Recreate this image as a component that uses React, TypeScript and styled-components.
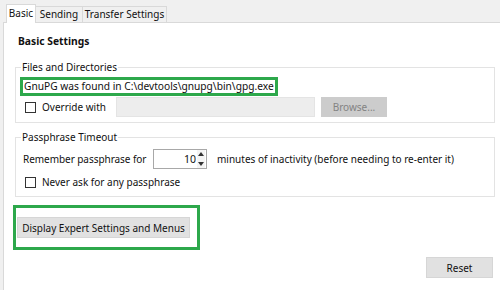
import React from "react";
import styled, { createGlobalStyle } from "styled-components";

const GlobalStyle = createGlobalStyle`
  html, body { margin: 0; padding: 0; }
  body { font-family: "Noto Sans", "Open Sans", sans-serif; color: #111; }
  * { box-sizing: border-box; }
`;

const Root = styled.div`
  width: 500px;
  height: 290px;
  background: #f0f0f0;
  overflow: hidden;
  display: flex;
  flex-direction: column;
  font-size: 10px;
`;

const TabStrip = styled.div`
  height: 22px;
  display: flex;
  align-items: flex-end;
  padding-left: 6px;
  position: relative;
  z-index: 1;
`;

const Tab = styled.div<{ $active?: boolean; $w: number }>`
  width: ${(p) => p.$w}px;
  height: ${(p) => (p.$active ? "19px" : "16px")};
  margin-bottom: ${(p) => (p.$active ? "-1px" : "0")};
  border: 1px solid #d9d9d9;
  border-bottom: none;
  margin-left: ${(p) => (p.$active ? "0" : "-1px")};
  background: ${(p) => (p.$active ? "#ffffff" : "#f0f0f0")};
  line-height: ${(p) => (p.$active ? "16px" : "15px")};
  text-align: center;
  white-space: nowrap;
`;

const Panel = styled.div`
  flex: 1;
  margin-left: 3px;
  background: #ffffff;
  border-left: 1px solid #d9d9d9;
  border-top: 1px solid #d9d9d9;
  padding: 10px 7px 0 14px;
  display: flex;
  flex-direction: column;
`;

const Title = styled.div`
  font-weight: 700;
  font-size: 10.3px;
  line-height: 16px;
  height: 16px;
`;

const Group = styled.fieldset<{ $mt: number }>`
  margin: ${(p) => p.$mt}px -2px 0 -3px;
  padding: 0;
  border: 1px solid #e3e3e3;
  min-width: 0;
`;

const Legend = styled.legend`
  margin-left: 5px;
  padding: 0 1px;
  line-height: 16px;
  height: 16px;
`;

const GroupBody = styled.div<{ $pt: number; $pb: number; $gap: number }>`
  display: flex;
  flex-direction: column;
  padding: ${(p) => p.$pt}px 0 ${(p) => p.$pb}px 4px;
  gap: ${(p) => p.$gap}px;
`;

const Highlight = styled.div`
  border: 3px solid #2da84b;
  align-self: flex-start;
`;

const FoundText = styled.div`
  width: 252px;
  height: 13px;
  line-height: 13px;
  padding-left: 1px;
  white-space: nowrap;
  font-size: 10.2px;
`;

const Row = styled.div<{ $h: number }>`
  display: flex;
  align-items: center;
  height: ${(p) => p.$h}px;
`;

const CheckBox = styled.span`
  width: 11px;
  height: 11px;
  border: 1px solid #333;
  background: #fff;
  margin: 0 6px 0 5px;
  flex: none;
`;

const Label = styled.span<{ $w?: number; $pl?: number; $ls?: number }>`
  white-space: nowrap;
  ${(p) => (p.$w ? `width: ${p.$w}px;` : "")}
  padding-left: ${(p) => p.$pl ?? 0}px;
  letter-spacing: ${(p) => p.$ls ?? 0}px;
  flex: none;
`;

const PathInput = styled.div`
  width: 199px;
  height: 20px;
  background: #ededed;
  border: 1px solid #e4e4e4;
  margin-right: 6px;
  flex: none;
`;

const DisabledButton = styled.div`
  width: 66px;
  height: 20px;
  background: #cccccc;
  color: #838383;
  display: flex;
  align-items: center;
  justify-content: center;
  flex: none;
`;

const Spin = styled.div`
  width: 54px;
  height: 20px;
  border: 1px solid #a8a8a8;
  display: flex;
  align-items: center;
  margin-right: 10px;
  background: #fff;
  flex: none;
`;

const SpinValue = styled.span`
  flex: 1;
  text-align: right;
  padding-right: 1px;
  font-size: 10.5px;
`;

const SpinButtons = styled.div`
  width: 8px;
  height: 18px;
  display: flex;
  flex-direction: column;
  justify-content: space-between;
  align-items: center;
  padding: 2px 0;
  margin-right: 1px;
  background: #f4f4f4;
`;

const Arrow = styled.svg`
  display: block;
`;

const ActionHighlight = styled.div`
  margin: 8px 0 0 -5px;
  width: 187px;
  height: 45px;
  border: 3px solid #2da84b;
  padding: 9px 0 0 1px;
`;

const Button = styled.div<{ $w: number }>`
  width: ${(p) => p.$w}px;
  height: 21px;
  background: #e1e1e1;
  border: 1px solid #d6d6d6;
  display: flex;
  align-items: center;
  justify-content: center;
  white-space: nowrap;
`;

const Footer = styled.div`
  display: flex;
  justify-content: flex-end;
  margin-top: 7px;
`;

export default function App() {
  return (
    <>
      <GlobalStyle />
      <Root>
        <TabStrip>
          <Tab $active $w={30}>Basic</Tab>
          <Tab $w={48}>Sending</Tab>
          <Tab $w={85}>Transfer Settings</Tab>
        </TabStrip>
        <Panel>
          <Title>Basic Settings</Title>
          <Group $mt={10}>
            <Legend>Files and Directories</Legend>
            <GroupBody $pt={2} $pb={5} $gap={1}>
              <Highlight>
                <FoundText>GnuPG was found in C:\devtools\gnupg\bin\gpg.exe</FoundText>
              </Highlight>
              <Row $h={20}>
                <CheckBox />
                <Label $w={74}>Override with</Label>
                <PathInput />
                <DisabledButton>Browse...</DisabledButton>
              </Row>
            </GroupBody>
          </Group>
          <Group $mt={6}>
            <Legend>Passphrase Timeout</Legend>
            <GroupBody $pt={4} $pb={6} $gap={5}>
              <Row $h={20}>
                <Label $w={133} $pl={3} $ls={-0.05}>Remember passphrase for</Label>
                <Spin>
                  <SpinValue>10</SpinValue>
                  <SpinButtons>
                    <Arrow width="6" height="4" viewBox="0 0 6 4">
                      <path d="M0 4 L3 0 L6 4 Z" fill="#333" />
                    </Arrow>
                    <Arrow width="6" height="4" viewBox="0 0 6 4">
                      <path d="M0 0 L3 4 L6 0 Z" fill="#333" />
                    </Arrow>
                  </SpinButtons>
                </Spin>
                <Label>minutes of inactivity (before needing to re-enter it)</Label>
              </Row>
              <Row $h={16}>
                <CheckBox />
                <Label>Never ask for any passphrase</Label>
              </Row>
            </GroupBody>
          </Group>
          <ActionHighlight>
            <Button $w={173}>Display Expert Settings and Menus</Button>
          </ActionHighlight>
          <Footer>
            <Button $w={67}>Reset</Button>
          </Footer>
        </Panel>
      </Root>
    </>
  );
}
